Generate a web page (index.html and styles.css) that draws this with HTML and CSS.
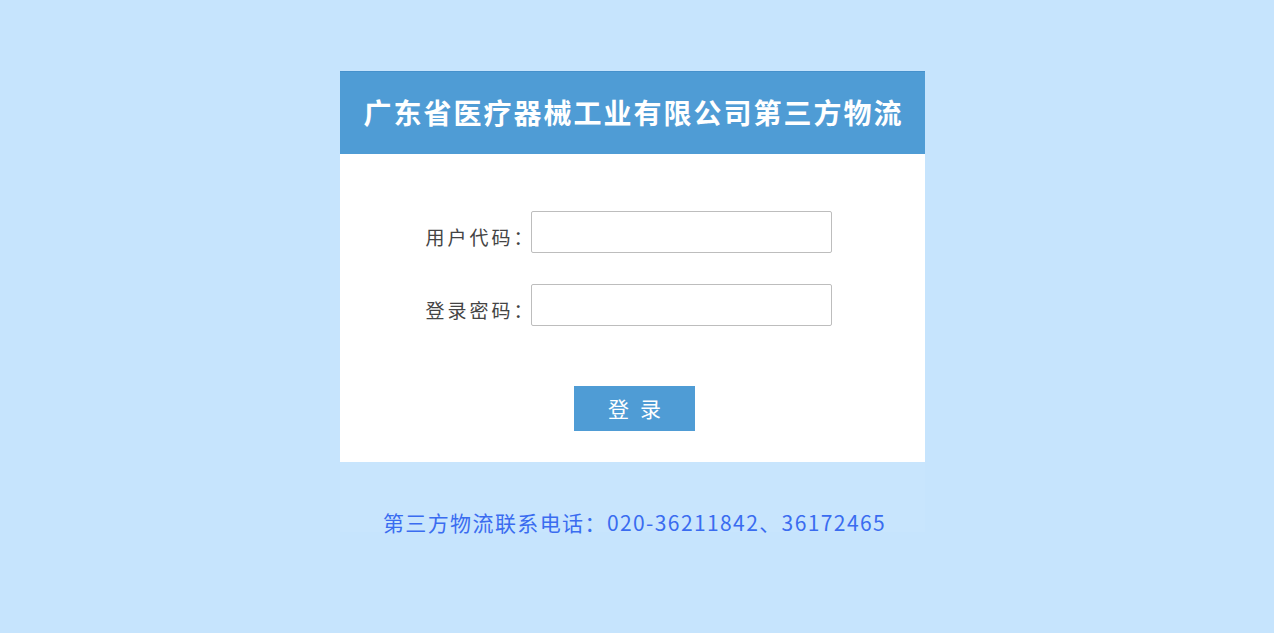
FILE: index.html
```html
<!DOCTYPE html>
<html lang="zh-CN">
<head>
<meta charset="utf-8">
<title>登录</title>
<link rel="stylesheet" href="styles.css">
</head>
<body>
<div class="card">
  <div class="card-head">广东省医疗器械工业有限公司第三方物流</div>
  <div class="card-body">
    <div class="row">
      <label class="label">用户代码：</label>
      <input class="field" type="text">
    </div>
    <div class="row">
      <label class="label">登录密码：</label>
      <input class="field" type="password">
    </div>
    <div class="actions">
      <button class="btn" type="button">登录</button>
    </div>
  </div>
  <div class="card-foot">第三方物流联系电话：020-36211842、36172465</div>
</div>
</body>
</html>
```
FILE: styles.css
```css
html, body {
  margin: 0;
  padding: 0;
}
body {
  background: #c6e4fd;
  font-family: "Noto Sans CJK SC", "Liberation Sans", sans-serif;
  min-height: 633px;
}
.card {
  width: 585px;
  margin: 71px 0 0 calc(50% - 297px);
}
.card-head {
  height: 83px;
  box-sizing: border-box;
  border-top: 1px solid #4691cc;
  background: #4f9cd5;
  color: #fff;
  font-weight: bold;
  font-size: 28px;
  letter-spacing: 2px;
  display: flex;
  align-items: center;
  justify-content: center;
  padding: 0 0 2px 2px;
}
.card-body {
  background: #fff;
  padding: 57px 0 31px;
  display: flex;
  flex-direction: column;
  align-items: center;
}
.row {
  display: flex;
  align-items: flex-end;
  margin: 0 8px 31px 0;
}
.row + .row {
  margin-bottom: 60px;
}
.label {
  font-size: 19px;
  line-height: 19px;
  letter-spacing: 3px;
  color: #444;
  padding-bottom: 7px;
  margin-right: -5px;
}
.field {
  width: 301px;
  height: 42px;
  box-sizing: border-box;
  border: 1px solid #bdbdbd;
  border-radius: 2px;
  background: #fff;
  margin: 0;
  padding: 0 6px;
  outline: none;
}
.actions {
  display: flex;
  justify-content: center;
  padding-left: 4px;
}
.btn {
  width: 121px;
  height: 45px;
  border: 0;
  margin: 0;
  padding: 0 0 2px 11px;
  background: #4f9cd5;
  color: #fff;
  font-family: "Noto Sans CJK SC", sans-serif;
  font-size: 21px;
  letter-spacing: 11px;
  cursor: pointer;
}
.card-foot {
  height: 70px;
  box-sizing: border-box;
  padding: 50px 0 0 4px;
  background: #c8e5fd;
  color: #3a6cf0;
  font-size: 21px;
  line-height: 21px;
  letter-spacing: 1.4px;
  text-align: center;
  white-space: nowrap;
}
```
